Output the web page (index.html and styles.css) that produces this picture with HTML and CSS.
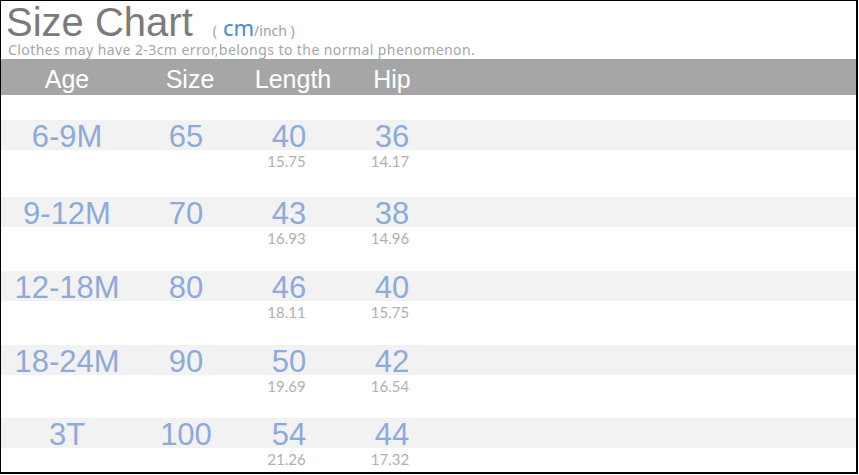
FILE: index.html
```html
<!DOCTYPE html>
<html>
<head>
<meta charset="utf-8">
<link rel="stylesheet" href="styles.css">
</head>
<body>
<div class="frame">
  <div class="title-row">
    <span class="title">Size Chart</span>
    <span class="units"><span class="paren">(</span><span class="cm">cm</span><span class="inch">/inch )</span></span>
  </div>
  <div class="note">Clothes may have 2-3cm error,belongs to the normal phenomenon.</div>
  <div class="head grid">
    <div class="c1">Age</div>
    <div class="c2">Size</div>
    <div class="c3">Length</div>
    <div class="c4">Hip</div>
  </div>
  <div class="rows">
    <div class="row">
      <div class="stripe grid"><div>6-9M</div><div>65</div><div>40</div><div>36</div></div>
      <div class="inch-line grid"><div></div><div></div><div class="i3">15.75</div><div class="i4">14.17</div></div>
    </div>
    <div class="row">
      <div class="stripe grid"><div>9-12M</div><div>70</div><div>43</div><div>38</div></div>
      <div class="inch-line grid"><div></div><div></div><div class="i3">16.93</div><div class="i4">14.96</div></div>
    </div>
    <div class="row">
      <div class="stripe grid"><div>12-18M</div><div>80</div><div>46</div><div>40</div></div>
      <div class="inch-line grid"><div></div><div></div><div class="i3">18.11</div><div class="i4">15.75</div></div>
    </div>
    <div class="row">
      <div class="stripe grid"><div>18-24M</div><div>90</div><div>50</div><div>42</div></div>
      <div class="inch-line grid"><div></div><div></div><div class="i3">19.69</div><div class="i4">16.54</div></div>
    </div>
    <div class="row">
      <div class="stripe grid"><div>3T</div><div>100</div><div>54</div><div>44</div></div>
      <div class="inch-line grid"><div></div><div></div><div class="i3">21.26</div><div class="i4">17.32</div></div>
    </div>
  </div>
</div>
</body>
</html>
```

FILE: styles.css
```css
html, body {
  margin: 0;
  padding: 0;
  background: #ffffff;
}

.frame {
  width: 855px;
  height: 471px;
  border-left: 1px solid #000;
  border-top: 1px solid #000;
  border-right: 2px solid #000;
  border-bottom: 2px solid #000;
  overflow: hidden;
  font-family: "Liberation Sans", Arial, sans-serif;
}

.title-row {
  height: 40px;
  padding-left: 5px;
  display: flex;
  align-items: baseline;
  box-sizing: border-box;
  padding-top: 2px;
  line-height: 38px;
}

.title {
  font-size: 40px;
  color: #7b7b7b;
}

.units {
  margin-left: 20px;
  color: #a0a0a0;
  font-family: "Noto Sans", "Open Sans", sans-serif;
}

.paren {
  font-size: 14px;
  margin-right: 6px;
}

.cm {
  font-size: 22px;
  color: #4a8ccc;
}

.inch {
  font-size: 14px;
}

.note {
  height: 18px;
  line-height: 18px;
  padding-left: 7px;
  font-family: "Noto Sans", "Open Sans", sans-serif;
  font-size: 14px;
  color: #a6a6a6;
  letter-spacing: 0.42px;
  white-space: nowrap;
}

.grid {
  display: grid;
  grid-template-columns: 132px 108px 96px 110px;
  text-align: center;
}

.head {
  height: 36px;
  box-sizing: border-box;
  padding-top: 4px;
  line-height: 32px;
  background: #a6a6a6;
  color: #ffffff;
  font-size: 25px;
}

.head .c2 { padding-left: 6px; }
.head .c3 { padding-left: 8px; }

.rows {
  padding-top: 25px;
}

.row {
  height: 74.5px;
}

.row:nth-child(1) { height: 76.5px; }
.row:nth-child(2) { height: 74px; }
.row:nth-child(3) { height: 74px; }
.row:nth-child(4) { height: 73.5px; }

.stripe {
  height: 30px;
  box-sizing: border-box;
  padding-top: 4px;
  line-height: 26px;
  background: #f2f2f2;
  color: #8eaadb;
  font-size: 31px;
}

.stripe > div:nth-child(2) { padding-right: 2px; }

.inch-line {
  margin-top: 2px;
  line-height: 18px;
  font-family: Lato, "Open Sans", sans-serif;
  font-size: 15px;
  color: #b0b0b0;
}

.i3 { padding-right: 5px; }
.i4 { padding-right: 4px; }
```
